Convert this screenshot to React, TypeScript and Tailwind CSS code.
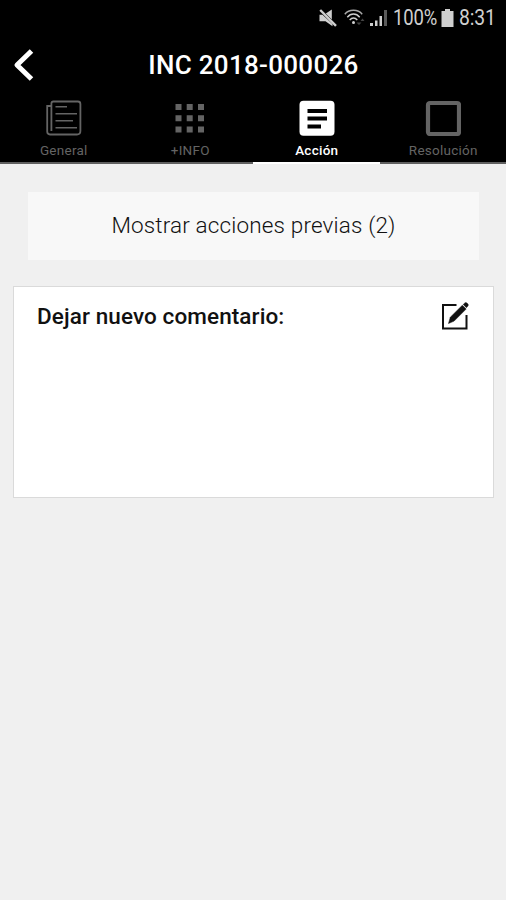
import React from "react";
import { clsx } from "clsx";

function StatusBar() {
  return (
    <div className="flex h-9 items-center justify-end pr-3 text-[#cfcfcf]">
      <svg className="mr-[7px] h-[18px] w-[18px]" viewBox="0 0 18 18" fill="currentColor">
        <path d="M.5 5.800h3L13.500 15v2.200L6.500 12.300h-6z" />
        <path d="M6.800 4.600 12.800.500v10z" />
        <path d="M1.200 1 17 16.800" stroke="currentColor" strokeWidth="2.400" fill="none" />
      </svg>
      <svg className="mr-1 h-[18px] w-[22px]" viewBox="0 0 22 18" fill="none" stroke="currentColor" strokeWidth="1.4">
        <path d="M.8 5.200C5 0 14 0 18.200 5.200" stroke="#aaa" />
        <path d="M3.300 8.200C6.800 4 12.200 4 15.700 8.200" />
        <path d="M5.700 11C8 8.400 11 8.400 13.300 11" />
        <circle cx="9.500" cy="13.500" r="1.500" fill="currentColor" stroke="none" />
        <path d="m12.500 13.500 2.500 2.500 2.500-2.500zM16.500 12l2-2.500 2 2.500z" fill="#444" stroke="none" />
      </svg>
      <svg className="mr-[5px] h-[18px] w-[18px]" viewBox="0 0 18 18" fill="currentColor">
        <path d="M0 14h3v3H0zM5 11.500h2.500V17H5zM9.500 7H12v10H9.500z" />
        <path d="M14 1h3v16h-3z" fill="#5a5a5a" />
      </svg>
      <span className="mr-[5px] w-[43px] text-[22px] leading-none tracking-[-0.2px]">
        <span className="inline-block origin-left scale-x-[0.84]">100%</span>
      </span>
      <svg className="mr-[5px] h-[18px] w-[13px]" viewBox="0 0 13 18" fill="currentColor">
        <path d="M4 0h5v2h3.500v16H.5V2H4z" />
      </svg>
      <span className="w-[35px] text-[22px] leading-none tracking-[-0.2px]">
        <span className="inline-block origin-left scale-x-[0.88]">8:31</span>
      </span>
    </div>
  );
}

function GeneralIcon() {
  return (
    <svg className="h-9 w-9" viewBox="0 0 36 36" fill="none" stroke="currentColor" strokeWidth="1.8">
      <path d="M5.400 31V3.500q0-2 2-2h24.500q2.500 0 2.500 2.500v27q0 3.500-3.500 3.500H4Q1.200 34.500 1.200 31.500V6h4.200" />
      <path d="M9.500 6.700H21M9.500 13.700H31M9.500 20.700H27M9.500 27.700H31" strokeWidth="1.500" />
    </svg>
  );
}

function InfoIcon() {
  return (
    <svg className="h-9 w-9" viewBox="0 0 36 36" fill="currentColor">
      <path d="M3.500 4h6v6h-6zM14.700 4h6v6h-6zM26 4h6v6h-6zM3.500 15.200h6v6h-6zM14.700 15.200h6v6h-6zM26 15.200h6v6h-6zM3.500 26.500h6v6h-6zM14.700 26.500h6v6h-6zM26 26.500h6v6h-6z" />
    </svg>
  );
}

function ActionIcon() {
  return (
    <svg className="h-9 w-9" viewBox="0 0 36 36">
      <rect x=".5" y=".8" width="35" height="35" rx="4" fill="currentColor" />
      <path d="M8.500 10.900H28M8.500 18.400H28M8.500 26.400h13.500" stroke="#000" strokeWidth="4" />
    </svg>
  );
}

function ResolutionIcon() {
  return (
    <svg className="h-9 w-9" viewBox="0 0 36 36" fill="none">
      <rect x="3" y="3" width="31" height="31" rx="2" stroke="currentColor" strokeWidth="4.200" />
    </svg>
  );
}

const tabs = [
  { label: "General", icon: GeneralIcon },
  { label: "+INFO", icon: InfoIcon },
  { label: "Acción", icon: ActionIcon, active: true },
  { label: "Resolución", icon: ResolutionIcon },
];

function Header() {
  return (
    <header className="h-[164px] bg-black text-white">
      <StatusBar />
      <div className="grid h-[58px] grid-cols-[48px_1fr_48px] items-center">
        <button aria-label="Volver" className="pl-[13px]">
          <svg
            className="h-[34px] w-[22px]"
            viewBox="0 0 22 34"
            fill="none"
            stroke="currentColor"
            strokeWidth="5"
            strokeLinejoin="round"
          >
            <path d="M18.500 3 4 17l14.500 14" />
          </svg>
        </button>
        <h1 className="pl-px text-center text-[26px] font-medium tracking-[0.3px] whitespace-nowrap">INC 2018-000026</h1>
      </div>
      <nav className="grid h-[70px] grid-cols-4">
        {tabs.map(({ label, icon: Icon, active }) => (
          <button
            key={label}
            className={clsx(
              "flex flex-col items-center border-b-2 pt-1.5 pl-px",
              active ? "border-white text-white" : "border-[#606060] text-[#646464]"
            )}
          >
            <Icon />
            <span
              className={clsx(
                "mt-[6px] text-[13.5px] leading-4 tracking-[0.25px]",
                active ? "font-medium" : "font-normal"
              )}
            >
              {label}
            </span>
          </button>
        ))}
      </nav>
    </header>
  );
}

export default function App() {
  return (
    <div className="h-[900px] w-[506px] overflow-hidden bg-[#f0f0f0] font-['Roboto',sans-serif]">
      <Header />
      <main className="px-[13px] pt-7">
        <button className="mx-[15px] flex h-[68px] w-[451px] items-center justify-center bg-[#f8f8f8] text-[22.5px] font-light tracking-[0.15px] text-[#111]">
          Mostrar acciones previas (2)
        </button>
        <section className="mt-[26px] flex h-[212px] w-[481px] items-start justify-between border border-[#dadada] bg-white pt-[13px] pr-[24px] pl-[23px]">
          <h2 className="text-[22.5px] leading-8 font-medium tracking-[0.1px] text-[#111]">Dejar nuevo comentario:</h2>
          <svg className="mt-0.5 h-[29px] w-[28px]" viewBox="0 0 28 29" fill="none" stroke="#111" strokeWidth="2">
            <path d="M15.500 3H2v23.500h23.500V13" />
            <path d="M7.500 21.500 9.300 15.200 21.300 3.300l3.800 3.800-12 12z" fill="#111" strokeWidth=".5" />
            <path d="m22.200 2.500 1.700-1.600q1-.8 2 .1l1 1q.9 1 0 2l-1.500 1.700z" fill="#111" strokeWidth=".5" />
          </svg>
        </section>
      </main>
    </div>
  );
}
